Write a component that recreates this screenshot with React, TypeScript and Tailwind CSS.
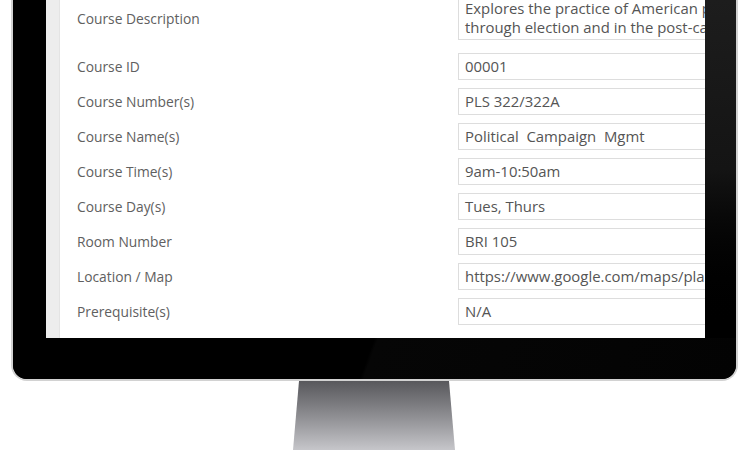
const rows = [
  { label: 'Course ID', value: '00001' },
  { label: 'Course Number(s)', value: 'PLS 322/322A' },
  { label: 'Course Name(s)', value: 'Political\u00a0\u00a0Campaign\u00a0\u00a0Mgmt' },
  { label: 'Course Time(s)', value: '9am-10:50am' },
  { label: 'Course Day(s)', value: 'Tues, Thurs' },
  { label: 'Room Number', value: 'BRI 105' },
  { label: 'Location / Map', value: 'https://www.google.com/maps/place/Brighton+Hall' },
  { label: 'Prerequisite(s)', value: 'N/A' },
];

export default function App() {
  return (
    <div className="w-[750px] h-[450px] bg-white overflow-hidden font-['Open_Sans',sans-serif]">
      {/* monitor */}
      <div className="ml-[11px] w-[727px] h-[381px] bg-black border-2 border-t-0 border-[#d2d2d2] rounded-b-[16px] overflow-hidden flex flex-col">
        <div className="flex h-[338px]">
          <div className="w-[33px] shrink-0" />
          <div className="w-[659px] shrink-0 bg-white flex overflow-hidden">
            <div className="w-[14px] shrink-0 bg-[#ededed] border-r border-[#e4e4e4]" />
            <div className="flex-1 pl-[17px] -mt-[8px]">
              {/* description */}
              <div className="flex mb-[13px]">
                <div className="w-[381px] shrink-0 pt-[13px] text-[13.8px] leading-[27px] text-[#606060]">Course Description</div>
                <div className="w-[420px] shrink-0 border border-[#dddddd] pl-[6px] pt-[6px] pb-[2px] text-[14.9px] leading-[19px] text-[#555] whitespace-nowrap">
                  Explores the practice of American political campaigns from candidacy
                  <br />
                  through election and in the post-campaign period of governing.
                </div>
              </div>
              {rows.map((r) => (
                <div key={r.label} className="flex mb-[8px]">
                  <div className="w-[381px] shrink-0 text-[13.8px] leading-[27px] text-[#606060]">{r.label}</div>
                  <div className="w-[420px] shrink-0 h-[27px] border border-[#dddddd] pl-[6px] text-[14.9px] leading-[25px] text-[#555] whitespace-nowrap">
                    {r.value}
                  </div>
                </div>
              ))}
            </div>
          </div>
          <div className="flex-1 bg-gradient-to-b from-[#1d1d1d] via-[#141414] to-black" />
        </div>
        {/* chin */}
        <div className="flex-1 bg-[linear-gradient(110deg,#000_0%,#000_49%,#060606_49.5%,#030303_100%)]" />
      </div>
      {/* stand */}
      <div className="ml-[293px] w-[162px] h-[69px] bg-gradient-to-b from-[#58585c] to-[#c6c6ca] [clip-path:polygon(6px_0,156px_0,100%_100%,0_100%)]" />
    </div>
  );
}
